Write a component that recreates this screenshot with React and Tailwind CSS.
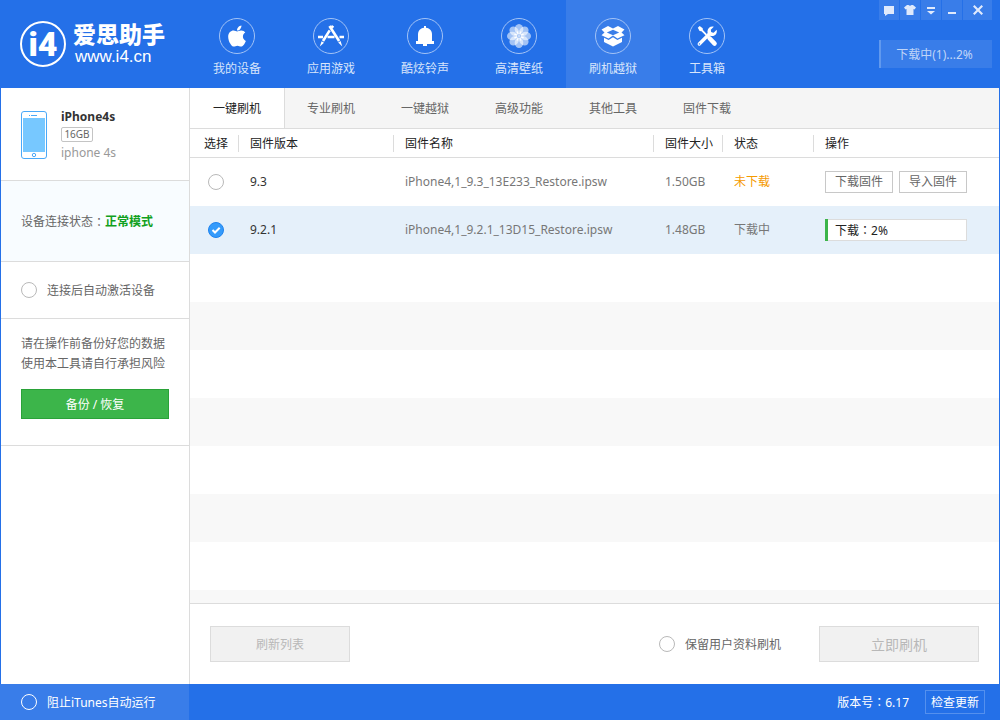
import React, { useState } from "react";
import { FaApple } from "react-icons/fa";

const AppStoreIcon = () => (
  <svg viewBox="0 0 26 22" className="h-[22px] w-[26px]" fill="none" stroke="currentColor" aria-hidden="true">
    <path d="M0 12h5M9.500 12h7M21.500 12H26" strokeWidth="2.600" />
    <path d="M15 .8l-1.200 1.900M11.700 5.400L5 16" strokeWidth="2.600" />
    <path d="M3.600 16.200l2.400 1.600-4.200 3.600z" fill="currentColor" stroke="none" />
    <path d="M11.500 1l9.600 15" strokeWidth="2.600" />
    <path d="M20.200 17.600l2.400-1.500 1.700 5.300z" fill="currentColor" stroke="none" />
  </svg>
);

const BellIcon = () => (
  <svg viewBox="0 0 20 20" className="h-5 w-5" fill="currentColor" aria-hidden="true">
    <path d="M9 0h2v1.800c4 .5 6 3.100 6 6.800V15h2v3h-7v2H8v-2H1v-3h2V8.600c0-3.700 2-6.300 6-6.800z" />
  </svg>
);

const petalAngles = [0, 45, 90, 135, 180, 225, 270, 315];
const FlowerIcon = () => (
  <svg viewBox="-12 -12 24 24" className="h-6 w-6" aria-hidden="true">
    {petalAngles.map((a) => (
      <ellipse key={a} cx="0" cy="-6.800" rx="4.300" ry="5.200" fill="#fff" fillOpacity="0.58" transform={`rotate(${a})`} />
    ))}
    {petalAngles.map((a) => (
      <path key={a} d="M0 -1.500V-5" stroke="#fff" strokeWidth="1.200" transform={`rotate(${a + 22.5})`} />
    ))}
    <circle r="1" fill="#fff" />
  </svg>
);

const BoxIcon = () => (
  <svg viewBox="0 0 24 22" className="h-[22px] w-6" fill="currentColor" aria-hidden="true">
    <path fillRule="evenodd" d="M7 1L12 3.500L17 1L23.500 4.500L20.500 7.500L23.500 10.300L16.500 13.500L12 10.500L7.500 13.500L.5 10.300L3.500 7.500L.5 4.500zM12 4.800L5.800 7.600L12 10.200L18.200 7.600z" />
    <path d="M3 12.800L7.600 15L12 12.300L16.400 15L21 12.800V17L12 21.600L3 17z" />
  </svg>
);

const ToolsIcon = () => (
  <svg viewBox="0 0 22 22" className="h-[22px] w-[22px]" fill="none" stroke="currentColor" aria-hidden="true">
    <path d="M3.300 19L14 8.300" strokeWidth="3.400" strokeLinecap="round" />
    <path d="M17.800 1.800L14.800 4.800L15.200 7.300L17.700 7.700L20.600 4.700C21.600 8 19.400 11 16 11C12.800 11 11.200 8.500 11.500 6C11.800 3 14.700 .9 17.800 1.800z" fill="currentColor" stroke="none" />
    <path d="M1.800 2.700L3.700 1.100L6.700 3.200L6.900 5.100L11 9.200L9.700 10.500L5.500 6.300L3.600 6z" fill="currentColor" stroke="none" />
    <path d="M13.500 13.300L18.600 18.600" strokeWidth="4.400" strokeLinecap="round" />
    <circle cx="3.400" cy="18.900" r=".7" fill="#2470e8" stroke="none" />
  </svg>
);

const PhoneIcon = () => (
  <svg viewBox="0 0 26 48" className="h-12 w-[26px] shrink-0" aria-hidden="true">
    <rect x=".5" y=".5" width="25" height="47" rx="2.500" fill="#fff" stroke="#4aa9f8" />
    <rect x="2" y="7" width="22" height="34" fill="#77c8ff" />
    <path d="M8 4.500h1M10 4.500h6" stroke="#4aa9f8" />
    <circle cx="13" cy="44" r="1.700" fill="#fff" stroke="#4aa9f8" />
  </svg>
);

const Colon = () => <span className="font-['Noto_Sans_CJK_TC',sans-serif]">：</span>;

const navItems = [
  { label: "我的设备", icon: <FaApple className="h-6 w-6" aria-hidden="true" /> },
  { label: "应用游戏", icon: <AppStoreIcon /> },
  { label: "酷炫铃声", icon: <BellIcon /> },
  { label: "高清壁纸", icon: <FlowerIcon /> },
  { label: "刷机越狱", icon: <BoxIcon />, active: true },
  { label: "工具箱", icon: <ToolsIcon /> },
];

const tabs = ["一键刷机", "专业刷机", "一键越狱", "高级功能", "其他工具", "固件下载"];

const windowButtons = [
  { label: "反馈", width: "w-5", icon: <path d="M1 2h10v8H5l-3 2v-2H1z" /> },
  { label: "皮肤", width: "w-5", icon: <path d="M3 1h1.500q1.500 1.500 3 0H9l3 2.500-1.500 2L9.500 5v6h-7V5l-1 .5L0 3.500z" /> },
  { label: "菜单", width: "w-5", icon: <path d="M2 3h8v2H2zM2 7h8l-4 3.500z" /> },
  { label: "最小化", width: "w-5", icon: <path d="M2 8h8v2H2z" /> },
  { label: "关闭", width: "w-[29px]", icon: <path d="M1 2.500L2.500 1L6 4.500L9.500 1L11 2.500L7.500 6L11 9.500L9.500 11L6 7.500L2.500 11L1 9.500L4.500 6z" /> },
];

const columns = ["固件版本", "固件名称", "固件大小", "状态"];

const radioBase = "m-0 block h-4 w-4 shrink-0 appearance-none rounded-full border";
const checkBox = radioBase + " border-[#b9b9b9] bg-white checked:bg-[#349bfb]";

function FirmwareRadio({ value, picked, onPick }) {
  return (
    <span className="relative block h-4 w-4">
      <input
        type="radio"
        name="firmware"
        aria-label={value}
        checked={picked === value}
        onChange={() => onPick(value)}
        className={radioBase + " peer border-[#b9b9b9] bg-white checked:border-[#1f83ee] checked:bg-[#349bfb]"}
      />
      <svg viewBox="0 0 16 16" className="pointer-events-none absolute inset-0 hidden h-4 w-4 peer-checked:block" fill="none" stroke="#fff" strokeWidth="2" aria-hidden="true">
        <path d="M4.500 8L7 10.500L11.700 5.800" />
      </svg>
    </span>
  );
}

export default function App() {
  const [picked, setPicked] = useState("9.2.1");

  return (
    <div className="flex min-h-screen flex-col bg-[#2470e8] font-['Noto_Sans','Noto_Sans_CJK_SC',sans-serif] text-xs leading-5 text-[#666]">
      <header className="flex h-[88px] shrink-0 text-white">
        <div className="flex w-[190px] shrink-0 items-center gap-[7px] pl-5">
          <div className="flex h-[46px] w-[46px] shrink-0 items-center justify-center rounded-full border-2 border-white">
            <span className="font-['Roboto','Liberation_Sans',sans-serif] text-[34px] leading-10 font-black">i4</span>
          </div>
          <div className="whitespace-nowrap">
            <div className="font-['Noto_Sans_CJK_SC',sans-serif] text-[23px] leading-6 font-black">爱思助手</div>
            <div className="pt-0.5 pl-0.5 font-['Liberation_Sans',sans-serif] text-[17px] leading-5">www.i4.cn</div>
          </div>
        </div>
        <nav className="flex">
          {navItems.map((item) => (
            <a
              key={item.label}
              href="#"
              className={"flex w-[94px] flex-col items-center gap-[5px] pt-[18px] " + (item.active ? "bg-[#397de9]" : "")}
            >
              <span className="flex h-9 w-9 items-center justify-center rounded-full border border-[#a3c3f6]">{item.icon}</span>
              <span className="text-[#d8e5fb]">{item.label}</span>
            </a>
          ))}
        </nav>
        <div className="ml-auto flex flex-col gap-5 pr-2">
          <div className="flex gap-px">
            {windowButtons.map((b) => (
              <button key={b.label} type="button" aria-label={b.label} className={"flex h-5 items-center justify-center bg-[#397de9] text-[#e0eafc] " + b.width}>
                <svg viewBox="0 0 12 12" className="h-3 w-3" fill="currentColor" aria-hidden="true">{b.icon}</svg>
              </button>
            ))}
          </div>
          <button type="button" className="h-7 border-l-2 border-[#6199ee] bg-[#397de9] pt-0.5 pr-1 text-[#c0d5f8]">下载中(1)...2%</button>
        </div>
      </header>

      <div className="mx-px flex flex-1 bg-white">
        <aside className="w-[189px] shrink-0 border-r border-[#dcdcdc]">
          <section className="flex h-[93px] items-start gap-[14px] border-b border-[#dcdcdc] pt-[23px] pl-5">
            <PhoneIcon />
            <div className="-mt-1">
              <div className="leading-5 font-bold text-[#333]">iPhone4s</div>
              <div className="w-8 rounded-xs border border-[#c4c4c4] text-center text-[10px] leading-[13px]">16GB</div>
              <div className="mt-px leading-5 text-[#999]">iphone 4s</div>
            </div>
          </section>
          <section className="flex h-[81px] items-center border-b border-[#dcdcdc] bg-[#f8fcff] pt-0.5 pl-5">
            设备连接状态<Colon /><span className="font-bold text-[#10a020]">正常模式</span>
          </section>
          <section className="flex h-[57px] items-center border-b border-[#dcdcdc] pl-5">
            <label className="flex items-center gap-[10px]">
              <input type="checkbox" className={checkBox} />
              <span className="pt-0.5">连接后自动激活设备</span>
            </label>
          </section>
          <section className="h-[127px] border-b border-[#dcdcdc] px-5 pt-[15px]">
            <p>请在操作前备份好您的数据</p>
            <p>使用本工具请自行承担风险</p>
            <button type="button" className="mt-[15px] h-[30px] w-full border border-[#2aa238] bg-[#3cb54a] pt-0.5 text-white">备份 / 恢复</button>
          </section>
        </aside>

        <main className="flex min-w-0 flex-1 flex-col">
          <div className="flex h-[41px] shrink-0 border-b border-[#dcdcdc] bg-[#f5f5f5]" role="tablist">
            {tabs.map((t, i) => (
              <button
                key={t}
                type="button"
                role="tab"
                aria-selected={i === 0}
                className={i === 0 ? "-mr-px w-[95px] border-r border-[#dcdcdc] bg-white pt-0.5 text-[#222]" : "w-[94px] pt-0.5"}
              >
                {t}
              </button>
            ))}
          </div>

          <table className="w-full table-fixed border-separate border-spacing-0 text-left">
            <colgroup>
              <col className="w-[49px]" />
              <col className="w-[155px]" />
              <col />
              <col className="w-[69px]" />
              <col className="w-[91px]" />
              <col className="w-[185px]" />
            </colgroup>
            <thead>
              <tr className="h-[29px] bg-white text-[#222] *:border-b *:border-[#dcdcdc]">
                <th className="p-0 font-normal"><div className="border-r border-[#dcdcdc] pl-[14px] leading-[17px]">选择</div></th>
                {columns.map((c) => (
                  <th key={c} className="p-0 font-normal"><div className="border-r border-[#dcdcdc] pl-[11px] leading-[17px]">{c}</div></th>
                ))}
                <th className="p-0 font-normal"><div className="pl-[11px] leading-[17px]">操作</div></th>
              </tr>
            </thead>
            <tbody className="text-[#777]">
              <tr className="h-12 bg-white">
                <td className="p-0 pl-[18px]"><FirmwareRadio value="9.3" picked={picked} onPick={setPicked} /></td>
                <td className="p-0 pl-[11px] text-[#333]">9.3</td>
                <td className="p-0 pl-[11px]">iPhone4,1_9.3_13E233_Restore.ipsw</td>
                <td className="p-0 pl-[11px]">1.50GB</td>
                <td className="p-0 pl-[11px] text-[#f59a00]">未下载</td>
                <td className="p-0 pl-[11px]">
                  <div className="flex gap-[6px] text-[#666]">
                    <button type="button" className="h-[22px] w-[68px] border border-[#c8c8c8] bg-white">下载固件</button>
                    <button type="button" className="h-[22px] w-[68px] border border-[#c8c8c8] bg-white">导入固件</button>
                  </div>
                </td>
              </tr>
              <tr className="h-12 bg-[#e5f0fa]">
                <td className="p-0 pl-[18px]"><FirmwareRadio value="9.2.1" picked={picked} onPick={setPicked} /></td>
                <td className="p-0 pl-[11px] text-[#333]">9.2.1</td>
                <td className="p-0 pl-[11px]">iPhone4,1_9.2.1_13D15_Restore.ipsw</td>
                <td className="p-0 pl-[11px]">1.48GB</td>
                <td className="p-0 pl-[11px]">下载中</td>
                <td className="p-0 pl-[11px]">
                  <div role="progressbar" aria-valuenow={2} aria-valuemin={0} aria-valuemax={100} aria-label="下载" className="flex h-[22px] w-[142px] bg-white text-[#222]">
                    <span className="w-[3px] bg-[#3cb54a]" />
                    <span className="flex-1 border border-l-0 border-[#dcdcdc] pl-[7px]">下载<Colon />2%</span>
                  </div>
                </td>
              </tr>
            </tbody>
          </table>
          <div className="flex-1 bg-[repeating-linear-gradient(#fff_0px,#fff_48px,#f8f8f8_48px,#f8f8f8_96px)]" />

          <div className="flex h-[81px] shrink-0 items-center border-t border-[#dcdcdc] bg-white px-5">
            <button type="button" disabled className="h-9 w-[140px] border border-[#dcdcdc] bg-[#f1f1f1] pt-0.5 text-[#b8b8b8]">刷新列表</button>
            <label className="mr-[38px] ml-auto flex items-center gap-[10px]">
              <input type="checkbox" className={checkBox} />
              <span className="pt-0.5">保留用户资料刷机</span>
            </label>
            <button type="button" disabled className="h-9 w-[160px] border border-[#dcdcdc] bg-[#f1f1f1] pt-0.5 text-sm text-[#b8b8b8]">立即刷机</button>
          </div>
        </main>
      </div>

      <footer className="flex h-9 shrink-0 items-center text-white">
        <label className="flex h-full w-[189px] items-center gap-[10px] bg-[#397de9] pl-[21px]">
          <input type="checkbox" className={radioBase + " border-white bg-transparent checked:bg-white"} />
          <span className="pt-0.5">阻止iTunes自动运行</span>
        </label>
        <span className="mr-4 ml-auto">版本号<Colon />6.17</span>
        <button type="button" className="mr-[15px] h-6 w-[60px] border border-[#5490ee] pt-0.5">检查更新</button>
      </footer>
    </div>
  );
}
